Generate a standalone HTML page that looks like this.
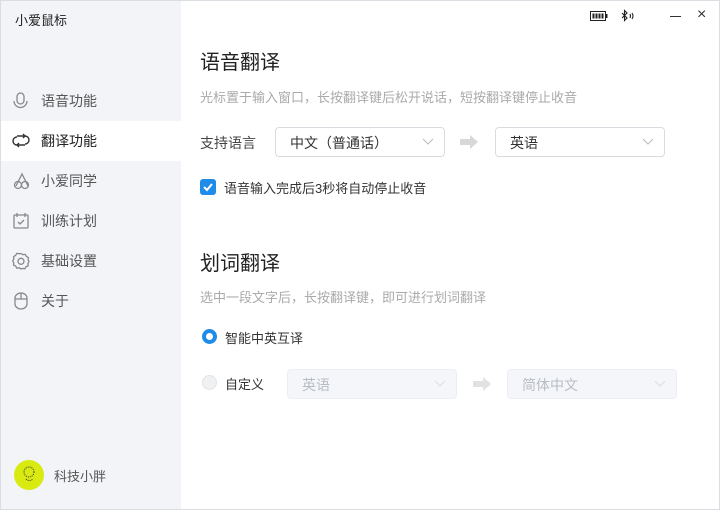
<!DOCTYPE html>
<html><head><meta charset="utf-8"><style>
*{margin:0;padding:0;box-sizing:border-box}
body{width:720px;height:510px;overflow:hidden;background:#fff;font-family:"Liberation Sans","Noto Sans CJK SC",sans-serif;position:relative;color:#333}
.frame{position:absolute;inset:0;border:1px solid #dcdde2;pointer-events:none}
.side{position:absolute;left:0;top:0;width:181px;height:510px;background:#f3f4f8}
.t{position:absolute;font-size:13px;white-space:nowrap}
.item{position:absolute;left:0;width:181px;height:40px;font-size:14px;color:#555}
.item span{position:absolute;left:41px;top:10px}
.item svg{position:absolute;left:12px;top:11px}
.sel{background:#fff;color:#222}
.dd{position:absolute;height:30px;border:1px solid #d9dbe0;border-radius:4px;background:#fff;font-size:14px}
.dd span{position:absolute;left:14px;top:5px}
.dd svg{position:absolute;right:10px;top:10px}
.dis{background:#f5f6f9;border-color:#eceef2;color:#b8bcc4}
</style></head><body>
<div class="side"></div>
<div class="t" style="left:15px;top:10px;color:#222">小爱鼠标</div>

<div class="item" style="top:81px"><svg width="18" height="18" viewBox="0 0 18 18" fill="none" stroke="#888" stroke-width="1.3"><rect x="5" y="1" width="7" height="11" rx="3.5"/><path d="M2 9a6.5 6.5 0 0 0 13 0"/></svg><span>语音功能</span></div>
<div class="item sel" style="top:121px"><svg width="18" height="18" viewBox="0 0 18 18" fill="none" stroke="#333" stroke-width="1.4"><path d="M5 4h8a4 4 0 0 1 0 8M13 13H5a4 4 0 0 1 0-8"/><path d="M11 2l2 2-2 2M7 11l-2 2 2 2"/></svg><span>翻译功能</span></div>
<div class="item" style="top:161px"><svg width="20" height="18" viewBox="0 0 20 18" fill="none" stroke="#888" stroke-width="1.3"><path d="M4 14L10 2l6 12"/><circle cx="6" cy="13" r="3.5"/><circle cx="13" cy="13" r="3.5"/></svg><span>小爱同学</span></div>
<div class="item" style="top:201px"><svg width="18" height="18" viewBox="0 0 18 18" fill="none" stroke="#888" stroke-width="1.3"><rect x="2" y="3" width="14" height="13" rx="1"/><path d="M5 1v4M13 1v4M6 10l2 2 4-4"/></svg><span>训练计划</span></div>
<div class="item" style="top:241px"><svg width="18" height="18" viewBox="0 0 18 18" fill="none" stroke="#888" stroke-width="1.3"><path d="M9 1.5l2 1.2 2.3-.3 1.1 2 2 1.2-.3 2.3L17 9.5l-1 2 .1 2.3-2.1 1-1.2 2-2.3-.4L9 17l-1.9-1.3-2.3.4-1.2-2-2-1 .1-2.3-1-2 1.2-1.9-.3-2.3 2-1.2 1.1-2 2.3.3z"/><circle cx="9" cy="9.3" r="3"/></svg><span>基础设置</span></div>
<div class="item" style="top:281px"><svg width="18" height="18" viewBox="0 0 18 18" fill="none" stroke="#888" stroke-width="1.3"><path d="M3 6a6 5 0 0 1 12 0v6a6 5 0 0 1-12 0z"/><path d="M9 1v6M3 7h12"/></svg><span>关于</span></div>

<div style="position:absolute;left:14px;top:460px;width:30px;height:30px;border-radius:50%;background:#d8ea10"></div>
<svg style="position:absolute;left:20px;top:464px" width="18" height="20" viewBox="0 0 18 20" fill="none" stroke="#333" stroke-width="1" stroke-dasharray="1 1"><circle cx="9" cy="8" r="5"/><path d="M6 15c2 2 5 2 7 0"/></svg>
<div class="t" style="left:54px;top:466px;color:#555">科技小胖</div>

<svg style="position:absolute;left:590px;top:10px" width="18" height="12" viewBox="0 0 18 12"><rect x="0.5" y="1.5" width="15" height="9" fill="none" stroke="#222"/><rect x="16" y="4" width="1.5" height="4" fill="#222"/><rect x="2.5" y="3.5" width="2" height="5" fill="#222"/><rect x="5.5" y="3.5" width="2" height="5" fill="#222"/><rect x="8.5" y="3.5" width="2" height="5" fill="#222"/><rect x="11.5" y="3.5" width="2" height="5" fill="#222"/></svg>
<svg style="position:absolute;left:621px;top:9px" width="14" height="14" viewBox="0 0 14 14" fill="none" stroke="#222" stroke-width="1.1"><path d="M1 4l5 5-2.5 2.5V1.5L6 4 1 9"/><path d="M9 5q1 2 0 4M11 4q2 3 0 6"/></svg>
<div style="position:absolute;left:670px;top:16px;width:11px;height:1.3px;background:#333"></div>
<div class="t" style="left:697px;top:6px;font-size:16px;color:#333">×</div>

<div class="t" style="left:200px;top:46px;font-size:20px;color:#222">语音翻译</div>
<div class="t" style="left:200px;top:87px;color:#aaa">光标置于输入窗口，长按翻译键后松开说话，短按翻译键停止收音</div>
<div class="t" style="left:200px;top:133px;font-size:14px;color:#444">支持语言</div>
<div class="dd" style="left:275px;top:127px;width:170px"><span>中文（普通话）</span><svg width="12" height="8" viewBox="0 0 12 8" fill="none" stroke="#bbb"><path d="M1 1l5 5 5-5"/></svg></div>
<svg style="position:absolute;left:460px;top:135px" width="20" height="14" viewBox="0 0 20 14"><path d="M0 4h10V0l8 7-8 7v-4H0z" fill="#d8d8d8"/></svg>
<div class="dd" style="left:495px;top:127px;width:170px"><span>英语</span><svg width="12" height="8" viewBox="0 0 12 8" fill="none" stroke="#bbb"><path d="M1 1l5 5 5-5"/></svg></div>
<div style="position:absolute;left:200px;top:179px;width:16px;height:16px;border-radius:3px;background:#1e8ce8"></div>
<svg style="position:absolute;left:200px;top:179px" width="16" height="16" viewBox="0 0 16 16" fill="none" stroke="#fff" stroke-width="2"><path d="M4 8l3 3 5-6"/></svg>
<div class="t" style="left:224px;top:178px;color:#333">语音输入完成后3秒将自动停止收音</div>

<div class="t" style="left:200px;top:247px;font-size:20px;color:#222">划词翻译</div>
<div class="t" style="left:200px;top:287px;color:#aaa">选中一段文字后，长按翻译键，即可进行划词翻译</div>
<div style="position:absolute;left:202px;top:329px;width:15px;height:15px;border-radius:50%;border:4px solid #1e8ce8;background:#fff"></div>
<div class="t" style="left:225px;top:328px;color:#333">智能中英互译</div>
<div style="position:absolute;left:202px;top:375px;width:15px;height:15px;border-radius:50%;border:1px solid #e2e3e6;background:#f0f1f3"></div>
<div class="t" style="left:225px;top:374px;color:#333">自定义</div>
<div class="dd dis" style="left:287px;top:369px;width:170px"><span>英语</span><svg width="12" height="8" viewBox="0 0 12 8" fill="none" stroke="#ddd"><path d="M1 1l5 5 5-5"/></svg></div>
<svg style="position:absolute;left:473px;top:377px" width="20" height="14" viewBox="0 0 20 14"><path d="M0 4h10V0l8 7-8 7v-4H0z" fill="#e2e2e2"/></svg>
<div class="dd dis" style="left:507px;top:369px;width:170px"><span>简体中文</span><svg width="12" height="8" viewBox="0 0 12 8" fill="none" stroke="#ddd"><path d="M1 1l5 5 5-5"/></svg></div>
<div class="frame"></div>
</body></html>
